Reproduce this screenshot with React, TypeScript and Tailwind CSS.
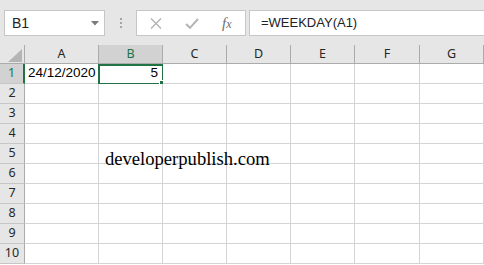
import React from "react";

const cols = [
  { key: "A", w: "w-[74px]" },
  { key: "B", w: "w-[64px]" },
  { key: "C", w: "w-[64px]" },
  { key: "D", w: "w-[64px]" },
  { key: "E", w: "w-[64px]" },
  { key: "F", w: "w-[65px]" },
  { key: "G", w: "w-[64px]" },
];

const rows = [1, 2, 3, 4, 5, 6, 7, 8, 9, 10];

function CornerCell() {
  return (
    <div className="relative h-[19px] w-[25px] shrink-0 border-r border-b border-[#ababab] bg-[#e6e6e6]">
      <svg className="absolute right-[2px] bottom-[1px]" width="14" height="13" viewBox="0 0 14 13">
        <polygon points="14,0 14,13 0,13" fill="#b5b5b5" />
      </svg>
    </div>
  );
}

function FormulaBar() {
  return (
    <div className="flex h-[45px] items-start bg-[#e6e6e6] pt-[10px]">
      <div className="ml-[4px] flex h-[26px] w-[101px] items-center justify-between border border-[#c6c6c6] bg-white pl-[7px] pr-[5px]">
        <span className="text-[14px] text-[#222]">B1</span>
        <svg width="8" height="5" viewBox="0 0 8 5">
          <polygon points="0,0 8,0 4,4.5" fill="#7a7a7a" />
        </svg>
      </div>
      <div className="flex h-[26px] w-[31px] flex-col items-center justify-center gap-[2px]">
        <span className="h-[2px] w-[2px] bg-[#a6a6a6]" />
        <span className="h-[2px] w-[2px] bg-[#a6a6a6]" />
        <span className="h-[2px] w-[2px] bg-[#a6a6a6]" />
      </div>
      <div className="flex h-[26px] w-[110px] items-center border border-[#c6c6c6] bg-white">
        <svg className="ml-[13px]" width="12" height="11" viewBox="0 0 12 11">
          <path d="M1 0.5 L11 10.5 M11 0.5 L1 10.5" stroke="#b4b4b4" strokeWidth="1.4" fill="none" />
        </svg>
        <svg className="ml-[23px]" width="14" height="11" viewBox="0 0 14 11">
          <path d="M1 6 L5 9.8 L13 1" stroke="#b4b4b4" strokeWidth="2" fill="none" />
        </svg>
        <span className="ml-[23px] font-['Liberation_Serif',serif] text-[15px] italic text-[#6e6e6e]">
          f<span className="text-[12px]">x</span>
        </span>
      </div>
      <div className="ml-[3px] flex h-[26px] flex-1 items-center border border-r-0 border-[#c6c6c6] bg-white pl-[11px]">
        <span className="text-[13px] text-[#222]">=WEEKDAY(A1)</span>
      </div>
    </div>
  );
}

function HeaderRow() {
  return (
    <div className="flex h-[19px]">
      <CornerCell />
      {cols.map((c) =>
        c.key === "B" ? (
          <div
            key={c.key}
            className={`${c.w} flex shrink-0 items-center justify-center border-r border-b border-[#ababab] bg-[#d2d2d2] font-['Noto_Sans',sans-serif] text-[12.5px] text-[#217346]`}
          >
            {c.key}
          </div>
        ) : (
          <div
            key={c.key}
            className={`${c.w} flex shrink-0 items-center justify-center border-r border-b border-[#ababab] bg-[#e6e6e6] font-['Noto_Sans',sans-serif] text-[12.5px] text-[#262626]`}
          >
            {c.key}
          </div>
        ),
      )}
    </div>
  );
}

function Row({ n }: { n: number }) {
  const selected = n === 1;
  return (
    <div className="flex h-[20px]">
      <div
        className={
          selected
            ? "flex w-[25px] shrink-0 items-center justify-center border-r-2 border-b border-r-[#217346] border-b-[#c6c6c6] bg-[#d2d2d2] font-['Noto_Sans',sans-serif] text-[12.5px] text-[#217346]"
            : "flex w-[25px] shrink-0 items-center justify-center border-r border-b border-r-[#ababab] border-b-[#c6c6c6] bg-[#e6e6e6] font-['Noto_Sans',sans-serif] text-[12.5px] text-[#262626]"
        }
      >
        {n}
      </div>
      {cols.map((c) => (
        <div key={c.key} className={`${c.w} relative flex shrink-0 items-end border-r border-b border-[#d4d4d4] bg-white`}>
          {n === 1 && c.key === "A" && (
            <span className="pb-[1px] pl-[3px] text-[13.5px] leading-[18px] text-black">24/12/2020</span>
          )}
          {n === 1 && c.key === "B" && (
            <>
              <span className="w-full pb-[1px] pr-[4px] text-right text-[13.5px] leading-[18px] text-black">5</span>
              <div className="pointer-events-none absolute top-0 -left-[1px] h-[21px] w-[66px] border-2 border-[#217346]" />
              <div className="absolute -right-[3px] -bottom-[3px] h-[6px] w-[6px] border border-white bg-[#217346]" />
            </>
          )}
        </div>
      ))}
    </div>
  );
}

export default function App() {
  return (
    <div className="relative h-[265px] w-[484px] overflow-hidden bg-white font-['Liberation_Sans',Arial,sans-serif]">
      <FormulaBar />
      <HeaderRow />
      {rows.map((n) => (
        <Row key={n} n={n} />
      ))}
      <div className="absolute left-[105px] top-[145px] font-['Liberation_Serif','Times_New_Roman',serif] text-[18.6px] text-black">
        developerpublish.com
      </div>
    </div>
  );
}
